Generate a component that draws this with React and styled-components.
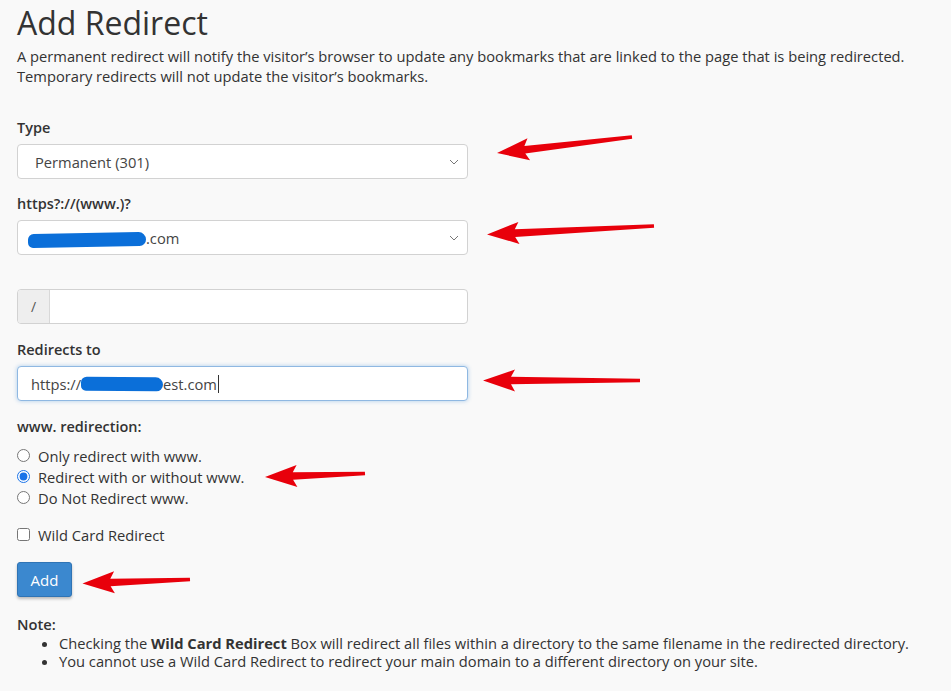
import React from "react"
import styled, { createGlobalStyle } from "styled-components"

const Global = createGlobalStyle`
    html, body {
        margin: 0;
        padding: 0;
        background: #f9f9f9;
    }
    body {
        font-family: "Open Sans", "Liberation Sans", sans-serif;
        color: #333;
    }
`

const Pagina = styled.div`
    position: relative;
    width: 951px;
    height: 691px;
    overflow: hidden;
    padding: 0 17px;
    box-sizing: border-box;
`

const Titulo = styled.h1`
    font-size: 32px;
    font-weight: 400;
    line-height: 38px;
    margin: 4px 0 5px 0;
    color: #333;
`

const Descripcion = styled.p`
    font-size: 14.7px;
    line-height: 19.5px;
    margin: 0 0 32px 0;
    color: #333;
`

const Grupo = styled.div`
    display: flex;
    flex-direction: column;
    width: 451px;
    margin-bottom: ${p => p.$gap || 15}px;
`

const Etiqueta = styled.label`
    font-size: 14.5px;
    font-weight: 600;
    line-height: 20px;
    margin-bottom: ${p => p.$mb || 6}px;
    color: #333;
`

const CajaSelect = styled.div`
    display: flex;
    align-items: center;
    justify-content: space-between;
    height: 35px;
    box-sizing: border-box;
    border: 1px solid #d2d2d2;
    border-radius: 4px;
    background: #fff;
    padding: 0 8px 0 17px;
    font-size: 14.7px;
    color: #444;
`

const Chevron = () => (
    <svg width="10" height="6" viewBox="0 0 10 6">
        <path d="M1 1 L5 5 L9 1" fill="none" stroke="#777" strokeWidth="1" />
    </svg>
)

const Tachon = styled.span`
    display: inline-block;
    vertical-align: middle;
    width: ${p => p.$w}px;
    height: 14px;
    margin-left: ${p => p.$ml || 0}px;
    background: #0b6fd9;
    border-radius: 7px 9px 8px 6px;
    transform: rotate(${p => p.$rot || 0}deg);
`

const GrupoInput = styled.div`
    display: flex;
    height: 35px;
    box-sizing: border-box;
    border: 1px solid #d2d2d2;
    border-radius: 4px;
    background: #fff;
    overflow: hidden;
`

const Prefijo = styled.span`
    width: 31px;
    display: flex;
    align-items: center;
    justify-content: center;
    background: #eee;
    border-right: 1px solid #d8d8d8;
    font-size: 14px;
    color: #555;
`

const CampoTexto = styled.div`
    display: flex;
    align-items: center;
    height: 35px;
    box-sizing: border-box;
    border: 1px solid ${p => (p.$focus ? "#8fb8e2" : "#d2d2d2")};
    box-shadow: ${p => (p.$focus ? "0 0 4px rgba(80, 150, 220, 0.45)" : "none")};
    border-radius: 4px;
    background: #fff;
    padding: 0 13px;
    font-size: 14.7px;
    color: #444;
    white-space: nowrap;
`

const Cursor = styled.span`
    display: inline-block;
    width: 1px;
    height: 18px;
    background: #333;
    margin-left: 1px;
`

const Opciones = styled.div`
    display: flex;
    flex-direction: column;
    margin-bottom: 16px;
`

const Opcion = styled.label`
    display: flex;
    align-items: center;
    gap: 8px;
    height: 21px;
    font-size: 14.7px;
    color: #333;

    input {
        margin: 0;
        width: 13px;
        height: 13px;
        accent-color: #1a73e8;
    }
`

const Boton = styled.button`
    width: 55px;
    height: 35px;
    margin-top: 17px;
    border: 1px solid #2f74b5;
    border-radius: 3px;
    background: #3b88cf;
    color: #fff;
    font-family: inherit;
    font-size: 15px;
    box-shadow: 0 2px 3px rgba(0, 0, 0, 0.25);
`

const Nota = styled.div`
    margin-top: 18px;
    font-size: 14.7px;
    line-height: 18.5px;
    color: #333;
`

const NotaTitulo = styled.div`
    font-weight: 600;
`

const Lista = styled.ul`
    margin: 0;
    padding-left: 42px;
`

const Flechas = styled.svg`
    position: absolute;
    inset: 0;
    pointer-events: none;
`

const flechas = [
    { t: [632, 137], p: [497, 153] },
    { t: [654, 226], p: [487, 234.5] },
    { t: [640, 380.5], p: [483, 380.5] },
    { t: [365, 473.5], p: [265, 477] },
    { t: [190, 579.5], p: [82.5, 583.5] },
]

const puntosFlecha = ({ t, p }) => {
    const dx = p[0] - t[0]
    const dy = p[1] - t[1]
    const len = Math.hypot(dx, dy)
    const ux = dx / len
    const uy = dy / len
    const nx = -uy
    const ny = ux
    const h = 28
    const bx = p[0] - ux * h
    const by = p[1] - uy * h
    const sx = p[0] - ux * (h + 4)
    const sy = p[1] - uy * (h + 4)
    const pt = (x, y) => `${x.toFixed(1)},${y.toFixed(1)}`
    return [
        pt(t[0] + nx * 1.8, t[1] + ny * 1.8),
        pt(bx + nx * 3.8, by + ny * 3.8),
        pt(sx + nx * 11, sy + ny * 11),
        pt(p[0], p[1]),
        pt(sx - nx * 11, sy - ny * 11),
        pt(bx - nx * 3.8, by - ny * 3.8),
        pt(t[0] - nx * 1.8, t[1] - ny * 1.8),
    ].join(" ")
}

const App = () => {
    return <>
    <Global />
    <Pagina>
        <Titulo>Add Redirect</Titulo>
        <Descripcion>
            A permanent redirect will notify the visitor’s browser to update any bookmarks that are linked to the page that is being redirected.<br />
            Temporary redirects will not update the visitor’s bookmarks.
        </Descripcion>

        <Grupo>
            <Etiqueta>Type</Etiqueta>
            <CajaSelect>
                <span>Permanent (301)</span>
                <Chevron />
            </CajaSelect>
        </Grupo>

        <Grupo $gap={34}>
            <Etiqueta>https?://(www.)?</Etiqueta>
            <CajaSelect>
                <span><Tachon $w={118} $ml={-7} $rot={-1} />.com</span>
                <Chevron />
            </CajaSelect>
        </Grupo>

        <Grupo $gap={16}>
            <GrupoInput>
                <Prefijo>/</Prefijo>
            </GrupoInput>
        </Grupo>

        <Grupo $gap={16}>
            <Etiqueta>Redirects to</Etiqueta>
            <CampoTexto $focus>
                https://<Tachon $w={82} $rot={0.5} />est.com<Cursor />
            </CampoTexto>
        </Grupo>

        <Etiqueta as="div" $mb={8}>www. redirection:</Etiqueta>
        <Opciones>
            <Opcion><input type="radio" name="www" />Only redirect with www.</Opcion>
            <Opcion><input type="radio" name="www" defaultChecked />Redirect with or without www.</Opcion>
            <Opcion><input type="radio" name="www" />Do Not Redirect www.</Opcion>
        </Opciones>

        <Opcion><input type="checkbox" />Wild Card Redirect</Opcion>

        <Boton>Add</Boton>

        <Nota>
            <NotaTitulo>Note:</NotaTitulo>
            <Lista>
                <li>Checking the <b>Wild Card Redirect</b> Box will redirect all files within a directory to the same filename in the redirected directory.</li>
                <li>You cannot use a Wild Card Redirect to redirect your main domain to a different directory on your site.</li>
            </Lista>
        </Nota>

        <Flechas width="951" height="691" viewBox="0 0 951 691">
            {flechas.map((f, i) => (
                <polygon key={i} points={puntosFlecha(f)} fill="#e8000b" />
            ))}
        </Flechas>
    </Pagina>
    </>
}

export default App
